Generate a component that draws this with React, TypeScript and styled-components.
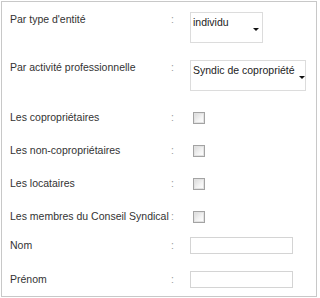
import styled, { createGlobalStyle } from "styled-components"

const Global = createGlobalStyle`
  html, body {
    margin: 0;
    padding: 0;
    background: #ffffff;
  }
  body {
    font-family: "Liberation Sans", Arial, sans-serif;
  }
`

export default function App() {
  return (
    <>
      <Global />
      <Panel>
        <Row $top>
          <Label $pad>Par type d'entité</Label>
          <Colon $pad>:</Colon>
          <SelectBox $w={73}>
            <Value>individu</Value>
            <Caret $right={3} />
          </SelectBox>
        </Row>
        <Row $top $gap={17}>
          <Label $pad>Par activité professionnelle</Label>
          <Colon $pad>:</Colon>
          <SelectBox $w={116}>
            <Value>Syndic de copropriété</Value>
            <Caret $right={0} />
          </SelectBox>
        </Row>
        <Row $gap={20}>
          <Label>Les copropriétaires</Label>
          <Colon>:</Colon>
          <Check type="checkbox" />
        </Row>
        <Row $gap={20}>
          <Label>Les non-copropriétaires</Label>
          <Colon>:</Colon>
          <Check type="checkbox" />
        </Row>
        <Row $gap={20}>
          <Label>Les locataires</Label>
          <Colon>:</Colon>
          <Check type="checkbox" />
        </Row>
        <Row $gap={20}>
          <Label>Les membres du Conseil Syndical</Label>
          <Colon>:</Colon>
          <Check type="checkbox" />
        </Row>
        <Row $gap={14}>
          <Label>Nom</Label>
          <Colon>:</Colon>
          <TextInput type="text" />
        </Row>
        <Row $gap={17}>
          <Label>Prénom</Label>
          <Colon>:</Colon>
          <TextInput type="text" />
        </Row>
      </Panel>
    </>
  )
}

const Panel = styled.div`
  box-sizing: border-box;
  margin: 1px 0 0 1px;
  width: 316px;
  height: 296px;
  border: 1px solid #c8c8c8;
  padding: 10px 0 0 8px;
  font-size: 10.5px;
  color: #333333;
`
const Row = styled.div<{ $top?: boolean; $gap?: number }>`
  display: grid;
  grid-template-columns: 161px 19px auto;
  align-items: ${(p) => (p.$top ? "start" : "center")};
  margin-top: ${(p) => p.$gap ?? 0}px;
`
const Label = styled.div<{ $pad?: boolean }>`
  line-height: 13px;
  white-space: nowrap;
  padding-top: ${(p) => (p.$pad ? "1px" : "0")};
`
const Colon = styled(Label)`
  color: #9a9a9a;
`
const SelectBox = styled.div<{ $w: number }>`
  box-sizing: border-box;
  display: flex;
  align-items: flex-start;
  width: ${(p) => p.$w}px;
  height: 31px;
  border: 1px solid #dcdcdc;
  background: #ffffff;
  padding: 3px 0 0 2px;
  color: #222222;
`
const Value = styled.span`
  line-height: 13px;
  white-space: nowrap;
`
const Caret = styled.span<{ $right: number }>`
  margin: 12px ${(p) => p.$right}px 0 auto;
  width: 0;
  height: 0;
  border-left: 3px solid transparent;
  border-right: 3px solid transparent;
  border-top: 3px solid #111111;
`
const Check = styled.input`
  appearance: none;
  box-sizing: border-box;
  margin: 0 0 0 3px;
  width: 12px;
  height: 12px;
  border: 1px solid #a3a3a3;
  box-shadow: inset 0 0 0 1px #e2e2e2;
  background: linear-gradient(135deg, #d8d8d8 0%, #f4f4f4 60%, #ffffff 100%);
`
const TextInput = styled.input`
  box-sizing: border-box;
  margin: 0;
  width: 103px;
  height: 17px;
  border: 1px solid #d4d4d4;
  background: #ffffff;
  padding: 0 2px;
  font: inherit;
`
